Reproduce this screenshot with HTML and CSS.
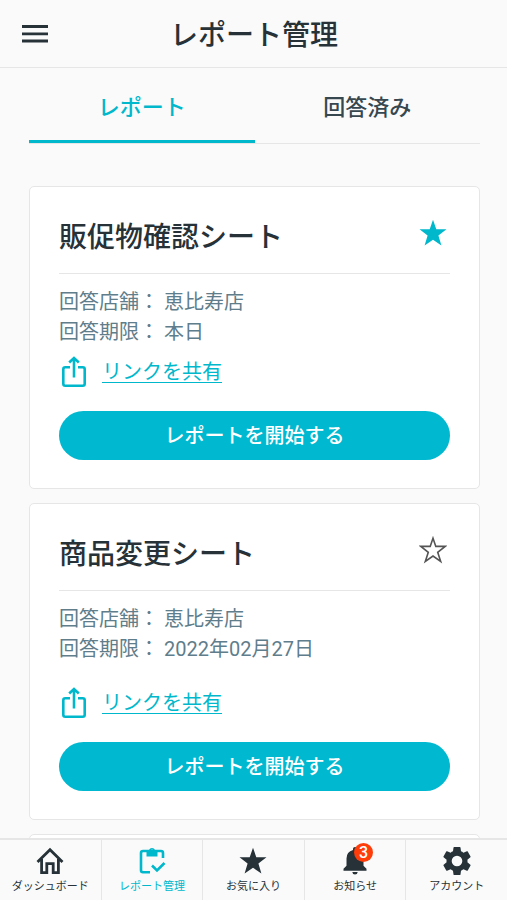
FILE: index.html
```html
<!DOCTYPE html>
<html lang="ja">
<head>
    <meta charset="UTF-8">
    <meta name="viewport" content="width=device-width, initial-scale=1.0">
    <title>レポート管理</title>
    <link rel="stylesheet" href="styles.css">
</head>
<body>
    <!-- Header -->
    <header>
        <button class="menu" type="button" aria-label="メニュー">
            <svg viewBox="0 0 26 18" width="26" height="18"><path d="M0 1.5h26M0 8.8h26M0 16h26" stroke="currentColor" stroke-width="2.8"/></svg>
        </button>
        <h1>レポート管理</h1>
    </header>

    <main>
        <!-- Tabs -->
        <div class="tabs">
            <button class="tab active" type="button">レポート</button>
            <button class="tab" type="button">回答済み</button>
        </div>

        <!-- Reports -->
        <div class="reports">
            <article class="card">
                <div class="card-head">
                    <h2>販促物確認シート</h2>
                    <button class="star on" type="button" aria-label="お気に入り解除">
                        <svg viewBox="0 0 28 28" width="28" height="28"><path fill="currentColor" d="M14 0.8l3.3 9.4h10.2l-8.1 6.2 3 10.2L14 20.7l-8.4 5.9 3-10.2L0.5 10.2h10.2z"/></svg>
                    </button>
                </div>
                <p>回答店舗： 恵比寿店</p>
                <p>回答期限： 本日</p>
                <div class="share">
                    <svg viewBox="0 0 24 32" width="24" height="32" fill="none" stroke="currentColor" stroke-width="2.6"><path d="M8 11.3H3.3q-2 0-2 2v14.4q0 2 2 2h17.4q2 0 2-2V13.3q0-2-2-2H16M12 21.5V2.5M7.2 6.5L12 2l4.8 4.5"/></svg>
                    <a href="#">リンクを共有</a>
                </div>
                <button class="start" type="button">レポートを開始する</button>
            </article>

            <article class="card upcoming">
                <div class="card-head">
                    <h2>商品変更シート</h2>
                    <button class="star" type="button" aria-label="お気に入りに追加">
                        <svg viewBox="0 0 28 28" width="28" height="28"><path fill="none" stroke="currentColor" stroke-width="1.6" d="M14 2.2l2.8 8.2h9.4l-7.5 5.9 3 9.2L14 20.1l-7.7 5.4 3-9.2-7.5-5.9h9.4z"/></svg>
                    </button>
                </div>
                <p>回答店舗： 恵比寿店</p>
                <p>回答期限： 2022年02月27日</p>
                <div class="share">
                    <svg viewBox="0 0 24 32" width="24" height="32" fill="none" stroke="currentColor" stroke-width="2.6"><path d="M8 11.3H3.3q-2 0-2 2v14.4q0 2 2 2h17.4q2 0 2-2V13.3q0-2-2-2H16M12 21.5V2.5M7.2 6.5L12 2l4.8 4.5"/></svg>
                    <a href="#">リンクを共有</a>
                </div>
                <button class="start" type="button">レポートを開始する</button>
            </article>

            <article class="card"></article>
        </div>
    </main>

    <!-- Bottom navigation -->
    <nav>
        <a href="#">
            <svg viewBox="0 0 28 28" width="28" height="28"><path fill="none" stroke="currentColor" stroke-width="2.8" d="M1.5 15L14 2.8l12.5 12.2M5.6 12v13.7h5.2v-9h6.4v9h5.2V12"/></svg>
            <span>ダッシュボード</span>
        </a>
        <a class="current" href="#">
            <svg viewBox="0 0 28 28" width="28" height="28"><path fill="none" stroke="currentColor" stroke-width="2.6" d="M12 25.2H5q-2 0-2-2V6q0-2 2-2h18q2 0 2 2v5M14 18.5l5 5 7.500-7.500"/><path fill="currentColor" fill-rule="evenodd" d="M8.500 3h2.500a3.200 3.200 0 0 1 6 0h2.500v6.500h-11zM14 2.500a1.300 1.300 0 1 0 .01 0z"/></svg>
            <span>レポート管理</span>
        </a>
        <a href="#">
            <svg viewBox="0 0 28 28" width="28" height="28"><path fill="currentColor" d="M14 0.8l3.3 9.4h10.2l-8.1 6.2 3 10.2L14 20.7l-8.4 5.9 3-10.2L0.5 10.2h10.2z"/></svg>
            <span>お気に入り</span>
        </a>
        <a href="#">
            <span class="bell">
                <svg viewBox="0 0 28 28" width="28" height="28"><path fill="currentColor" d="M2.5 23.8v-2l3-3V11.5q0-7 6.500-8.600V1.800q0-1.800 2-1.800t2 1.800v1.100q6.500 1.600 6.500 8.600v7.300l3 3v2zM11.300 25h5.400q-.3 2.500-2.700 2.500T11.300 25z"/></svg>
                <span class="badge">3</span>
            </span>
            <span>お知らせ</span>
        </a>
        <a href="#">
            <svg viewBox="2 2 20 20" width="28" height="28"><path fill="currentColor" d="M19.430 12.980c.04-.32.07-.64.07-.98s-.03-.66-.07-.98l2.110-1.650c.19-.15.24-.42.12-.64l-2-3.460c-.12-.22-.39-.3-.61-.22l-2.490 1c-.52-.4-1.080-.73-1.690-.98l-.38-2.650C14.460 2.180 14.250 2 14 2h-4c-.25 0-.46.18-.49.42l-.38 2.650c-.61.25-1.170.59-1.690.98l-2.490-1c-.23-.09-.49 0-.61.22l-2 3.460c-.13.22-.07.49.12.64l2.110 1.650c-.04.32-.07.65-.07.98s.03.66.07.98l-2.110 1.650c-.19.15-.24.42-.12.64l2 3.460c.12.22.39.3.61.22l2.490-1c.52.4 1.080.73 1.690.98l.38 2.650c.03.24.24.42.49.42h4c.25 0 .46-.18.49-.42l.38-2.650c.61-.25 1.170-.59 1.690-.98l2.490 1c.23.09.49 0 .61-.22l2-3.460c.12-.22.07-.49-.12-.64zM12 15.800a3.800 3.800 0 1 1 0-7.600 3.800 3.800 0 0 1 0 7.600z"/></svg>
            <span>アカウント</span>
        </a>
    </nav>
</body>
</html>
```

FILE: styles.css
```css
* {
    box-sizing: border-box;
}

body {
    margin: 0;
    height: 100vh;
    display: flex;
    flex-direction: column;
    font-family: Roboto, "Noto Sans CJK JP", sans-serif;
    font-size: 20px;
    line-height: 30px;
    color: #263238;
    background-color: #fafafa;
}

button {
    padding: 0;
    border: none;
    background: none;
    font: inherit;
    color: inherit;
    cursor: pointer;
}

svg {
    display: block;
    flex-shrink: 0;
}

h1,
h2,
p {
    margin: 0;
}

/* Header */
header {
    display: grid;
    grid-template-columns: 26px 1fr 26px;
    align-items: center;
    height: 68px;
    padding: 0 21px 0 22px;
    border-bottom: 1px solid #e6e6e6;
    flex-shrink: 0;
}

h1,
h2 {
    font-size: 28px;
    font-weight: 500;
    line-height: 40px;
}

h1 {
    padding-top: 4px;
    text-align: center;
}

main {
    flex: 1;
    min-height: 0;
    padding: 0 27px 0 29px;
    overflow-y: auto;
    scrollbar-width: none;
}

/* Tabs */
.tabs {
    display: flex;
    height: 76px;
    border-bottom: 1px solid #e6e6e6;
}

.tab {
    flex: 1;
    height: 75px;
    padding-top: 8px;
    border-bottom: 3px solid transparent;
    font-size: 22px;
    font-weight: 500;
    color: #37474f;
}

.tab.active {
    color: #00b8cc;
    border-color: #00b8cc;
}

/* Cards */
.reports {
    display: flex;
    flex-direction: column;
    gap: 14px;
    padding: 42px 0 14px;
}

.card {
    min-height: 200px;
    padding: 28px 29px;
    background-color: #fff;
    border: 1px solid #e6e6e6;
    border-radius: 5px;
}

.card-head {
    display: flex;
    justify-content: space-between;
    align-items: flex-start;
    height: 59px;
    padding-right: 3px;
    margin-bottom: 13px;
    border-bottom: 1px solid #e6e6e6;
}

h2 {
    padding-top: 3px;
}

.card p {
    color: #607d8b;
}

.star {
    padding-top: 4px;
    color: #555;
}

.star.on,
.share {
    color: #00b8cc;
}

.share {
    display: flex;
    align-items: center;
    gap: 16px;
    height: 32px;
    padding-left: 3px;
    margin: 9px 0 23px;
}

.upcoming .share {
    margin-top: 23px;
}

.share a {
    line-height: 20px;
    color: inherit;
    text-decoration: none;
    border-bottom: 1px solid;
}

.start {
    display: block;
    width: 100%;
    height: 49px;
    border-radius: 25px;
    background-color: #00b8cf;
    color: #fff;
    font-weight: 500;
}

/* Bottom navigation */
nav {
    display: flex;
    flex-shrink: 0;
    height: 62px;
    border-top: 2px solid #e6e6e6;
}

nav a {
    flex: 1 0 0;
    display: flex;
    flex-direction: column;
    align-items: center;
    padding-top: 7px;
    gap: 4px;
    font-size: 11px;
    line-height: 16px;
    color: inherit;
    text-decoration: none;
    white-space: nowrap;
}

nav a + a {
    border-left: 1px solid #e6e6e6;
}

nav a.current {
    color: #00b8cc;
}

.bell {
    position: relative;
}

.badge {
    position: absolute;
    top: -4px;
    right: -4px;
    width: 19px;
    height: 19px;
    border-radius: 50%;
    background-color: #ff3d0a;
    color: #fff;
    font-size: 16px;
    font-weight: 500;
    line-height: 19px;
    text-align: center;
}
```
